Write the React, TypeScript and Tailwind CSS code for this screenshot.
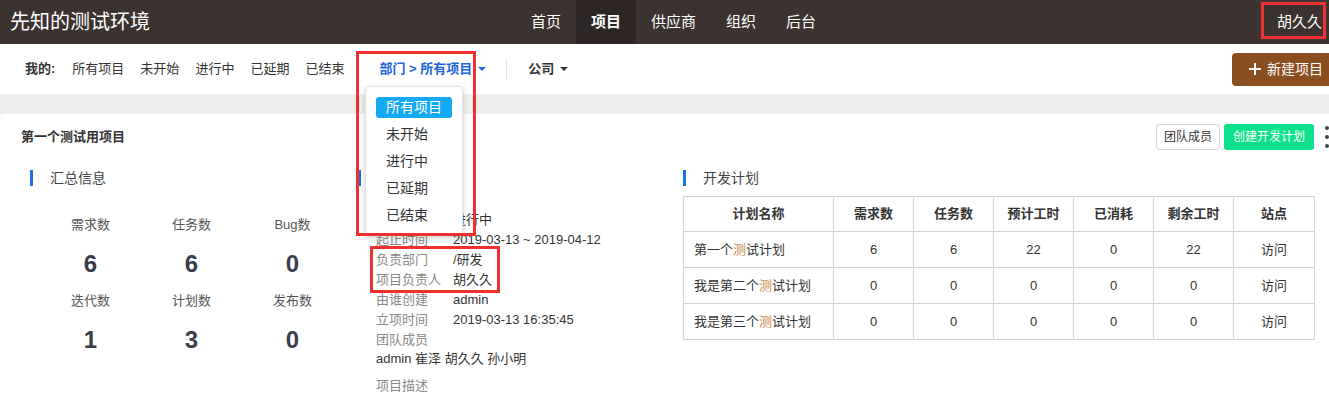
import React from "react";

const navItems = ["首页", "项目", "供应商", "组织", "后台"];
const myFilters = ["所有项目", "未开始", "进行中", "已延期", "已结束"];
const menuItems = ["所有项目", "未开始", "进行中", "已延期", "已结束"];

const stats = [
  { label: "需求数", value: 6 },
  { label: "任务数", value: 6 },
  { label: "Bug数", value: 0 },
  { label: "迭代数", value: 1 },
  { label: "计划数", value: 3 },
  { label: "发布数", value: 0 },
];

const info = [
  { label: "状态", value: "进行中" },
  { label: "起止时间", value: "2019-03-13 ~ 2019-04-12" },
  { label: "负责部门", value: "/研发" },
  { label: "项目负责人", value: "胡久久" },
  { label: "由谁创建", value: "admin" },
  { label: "立项时间", value: "2019-03-13 16:35:45" },
];

const plans = [
  { prefix: "第一个", nums: [6, 6, 22, 0, 22] },
  { prefix: "我是第二个", nums: [0, 0, 0, 0, 0] },
  { prefix: "我是第三个", nums: [0, 0, 0, 0, 0] },
];

const heads = ["计划名称", "需求数", "任务数", "预计工时", "已消耗", "剩余工时", "站点"];
const widths = ["w-[150px]", "w-[80px]", "w-[80px]", "w-[80px]", "w-[80px]", "w-[80px]", "w-[81px]"];

function Caret() {
  return (
    <span className="ml-[6px] inline-block h-0 w-0 border-x-[4px] border-t-[4px] border-x-transparent border-t-current" />
  );
}

function SectionTitle({ title }: { title: string }) {
  return (
    <div className="flex h-[16px] items-center">
      <span className="h-[16px] w-[3px] bg-[#1f6fe8]" />
      <span className="ml-[17px] text-[14px] text-[#444]">{title}</span>
    </div>
  );
}

function PlanName({ prefix }: { prefix: string }) {
  return (
    <span>
      {prefix}
      <span className="text-[#c98a45]">测</span>试计划
    </span>
  );
}

export default function App() {
  return (
    <div className="relative h-[408px] w-[1329px] overflow-hidden bg-[#efeeec] text-[#333] [font-family:'Liberation_Sans','Noto_Sans_CJK_SC',sans-serif]">
      {/* top bar */}
      <header className="flex h-[44px] items-center bg-[#3c3230] text-white">
        <div className="w-[516px] pl-[10px] text-[20px]">先知的测试环境</div>
        <nav className="flex h-full">
          {navItems.map((n) => (
            <div
              key={n}
              className={
                n === "项目"
                  ? "flex h-full items-center bg-[#2e2624] px-[15px] text-[15px] font-bold"
                  : "flex h-full items-center px-[15px] text-[15px]"
              }
            >
              {n}
            </div>
          ))}
        </nav>
        <div className="ml-auto pr-[7px] text-[15px]">胡久久</div>
      </header>

      {/* sub nav */}
      <div className="flex h-[50px] items-center bg-white pl-[25px] text-[13px]">
        <span className="font-bold">我的:</span>
        <div className="ml-[17px] flex gap-[16px]">
          {myFilters.map((f) => (
            <span key={f}>{f}</span>
          ))}
        </div>
        <span className="ml-[35px] flex items-center font-bold text-[#2164dc]">
          部门 &gt; 所有项目
          <Caret />
        </span>
        <span className="ml-[20px] h-[20px] w-px bg-[#e2e2e2]" />
        <span className="ml-[21px] flex items-center font-bold">
          公司
          <Caret />
        </span>
        <button className="ml-auto flex h-[33px] items-center gap-[6px] rounded-l-[4px] bg-[#8b4e1f] pl-[17px] pr-[6px] text-[14px] text-white">
          <svg width="12" height="12" viewBox="0 0 12 12">
            <path d="M6 0v12M0 6h12" stroke="white" strokeWidth="2" />
          </svg>
          新建项目
        </button>
      </div>

      {/* card */}
      <div className="mt-[20px] h-[294px] rounded-tl-[4px] bg-white">
        <div className="flex h-[46px] items-center pl-[21px]">
          <span className="text-[13px] font-bold text-[#333]">第一个测试用项目</span>
          <div className="ml-auto flex items-center">
            <button className="h-[26px] rounded-[3px] border border-[#d9d9d9] px-[7px] text-[12px] text-[#333]">
              团队成员
            </button>
            <button className="ml-[4px] h-[26px] rounded-[3px] bg-[#0ddf8a] px-[9px] text-[12px] text-white">
              创建开发计划
            </button>
            <div className="ml-[11px] flex flex-col gap-[5px]">
              <span className="h-[4px] w-[4px] rounded-full bg-[#444]" />
              <span className="h-[4px] w-[4px] rounded-full bg-[#444]" />
              <span className="h-[4px] w-[4px] rounded-full bg-[#444]" />
            </div>
          </div>
        </div>

        <div className="flex pt-[10px]">
          {/* summary */}
          <div className="w-[358px] pl-[30px]">
            <SectionTitle title="汇总信息" />
            <div className="ml-[10px] mt-[29px] grid w-[303px] grid-cols-3 gap-y-[12px] text-center">
              {stats.map((s) => (
                <div key={s.label}>
                  <div className="text-[13px] leading-[20px] text-[#555]">{s.label}</div>
                  <div className="mt-[14px] text-[24px] font-bold leading-[30px] text-[#3a3e48]">
                    {s.value}
                  </div>
                </div>
              ))}
            </div>
          </div>

          {/* base info */}
          <div className="w-[325px]">
            <SectionTitle title="基本信息" />
            <div className="ml-[18px] mt-[24px] text-[13px] leading-[20px]">
              {info.map((r) => (
                <div key={r.label} className="flex">
                  <span className="w-[77px] text-[#888]">{r.label}</span>
                  <span className="text-[#333]">{r.value}</span>
                </div>
              ))}
              <div className="text-[#888]">团队成员</div>
              <div className="leading-[18px] text-[#333]">admin 崔泽 胡久久 孙小明</div>
              <div className="mt-[8px] text-[#888]">项目描述</div>
            </div>
          </div>

          {/* plans */}
          <div>
            <SectionTitle title="开发计划" />
            <table className="mt-[10px] border-collapse text-[13px] text-[#333]">
              <thead>
                <tr className="h-[35px]">
                  {heads.map((h, i) => (
                    <th key={h} className={`${widths[i]} border border-[#d4d4da] font-bold`}>
                      {h}
                    </th>
                  ))}
                </tr>
              </thead>
              <tbody>
                {plans.map((p) => (
                  <tr key={p.prefix} className="h-[36px]">
                    <td className="border border-[#d4d4da] pl-[10px]">
                      <PlanName prefix={p.prefix} />
                    </td>
                    {p.nums.map((n, i) => (
                      <td key={i} className="border border-[#d4d4da] text-center">
                        {n}
                      </td>
                    ))}
                    <td className="border border-[#d4d4da] text-center">访问</td>
                  </tr>
                ))}
              </tbody>
            </table>
          </div>
        </div>
      </div>

      {/* dropdown menu */}
      <div className="absolute left-[365px] top-[86px] w-[98px] rounded-[4px] border border-[#e3e3e3] bg-white px-[10px] pb-[9px] pt-[10px] text-[14px] shadow-[0_2px_6px_rgba(0,0,0,0.18)]">
        {menuItems.map((m, i) => (
          <div
            key={m}
            className={
              i === 0
                ? "flex h-[21px] items-center rounded-[3px] bg-[#14a9f4] px-[10px] text-white"
                : "mt-[6px] flex h-[21px] items-center px-[10px] text-[#333]"
            }
          >
            {m}
          </div>
        ))}
      </div>

      {/* annotation boxes */}
      <div className="absolute left-[1261px] top-[2px] h-[37px] w-[65px] border-[3px] border-[#f0302f]" />
      <div className="absolute left-[356px] top-[51px] h-[185px] w-[120px] border-[3px] border-[#f0302f]" />
      <div className="absolute left-[370px] top-[246px] h-[47px] w-[130px] border-[3px] border-[#f0302f]" />
    </div>
  );
}
